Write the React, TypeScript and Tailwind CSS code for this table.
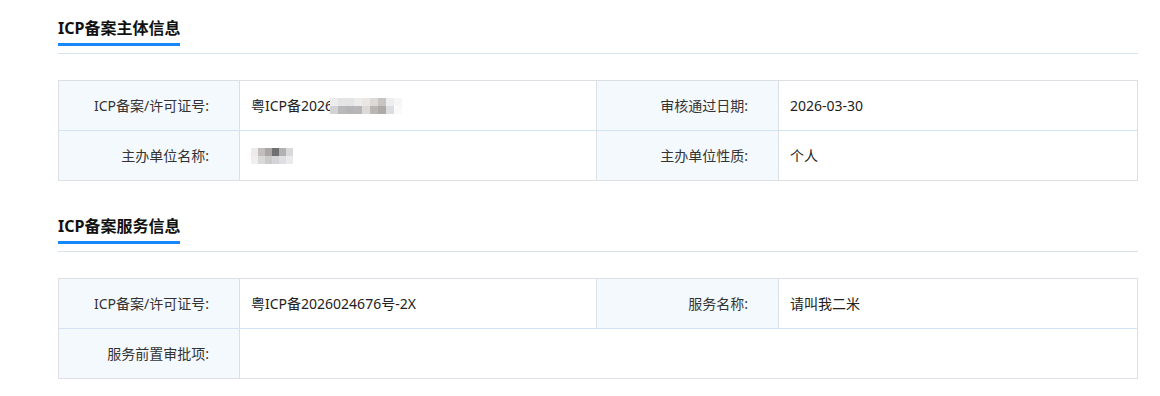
import type { ReactNode } from "react";

const font = {
  fontFamily: '"Noto Sans", "Noto Sans CJK SC", sans-serif',
};

// mosaic cells used for redacted values
const maskNumber = [
  ["#ededed", "#e5e5e5", "#e4e4e4", "#ececec", "#e9e6e3", "#ddd9d6", "#c9c4c2", "#eeeeee", "#f6f6f6"],
  ["#d2d2d4", "#b9b9bb", "#b5b5b7", "#b7b7b9", "#dcdad7", "#b9b6b4", "#aeaaa8", "#dcdde1", "#fafafa"],
];
const maskName = [
  ["#eeeaea", "#c3bebe", "#aaa6a6", "#707071", "#b1b1b3", "#d9d9db"],
  ["#f1eeee", "#dbd8d8", "#cbcacb", "#d4d4d6", "#dedfe1", "#eaeaec"],
];

function Mosaic({ cells, w }: { cells: string[][]; w: number }) {
  return (
    <span className="inline-flex flex-col">
      {cells.map((row, i) => (
        <span key={i} className="flex">
          {row.map((c, j) => (
            <span key={j} className="h-[8px]" style={{ width: w, background: c }} />
          ))}
        </span>
      ))}
    </span>
  );
}

function SectionTitle({ children }: { children: ReactNode }) {
  return (
    <div className="pb-[7px] border-b border-[#d5e3ef]">
      <span className="inline-block text-[16px] leading-[24px] font-bold text-[#111] pb-[3px] border-b-[3px] border-[#1787fb]">
        {children}
      </span>
    </div>
  );
}

function Label({ children, last }: { children: ReactNode; last?: boolean }) {
  return (
    <td
      className={`h-[50px] bg-[#f4f9fe] text-right pr-[30px] text-[14px] text-[#333] border-x border-x-[#dcdfe4] ${
        last ? "border-b border-b-[#dcdfe4]" : "border-b border-b-[#d3e3f3]"
      }`}
    >
      {children}
    </td>
  );
}

function Value({
  children,
  last,
  span,
}: {
  children?: ReactNode;
  last?: boolean;
  span?: number;
}) {
  return (
    <td
      colSpan={span}
      className={`h-[50px] pl-[11px] text-[14px] text-[#222] border-x border-x-[#dcdfe4] ${
        last ? "border-b border-b-[#dcdfe4]" : "border-b border-b-[#d3e3f3]"
      }`}
    >
      {children}
    </td>
  );
}

function InfoTable({ children }: { children: ReactNode }) {
  return (
    <table className="mt-[26px] w-full table-fixed border-collapse border-t border-[#dcdfe4]">
      <colgroup>
        <col className="w-[181px]" />
        <col className="w-[357px]" />
        <col className="w-[182px]" />
        <col />
      </colgroup>
      <tbody>{children}</tbody>
    </table>
  );
}

export default function App() {
  return (
    <div className="bg-white w-[1160px] h-[396px] pl-[58px] pr-[22px]" style={font}>
      <section className="pt-[16px] mb-[17px]">
        <SectionTitle>ICP备案主体信息</SectionTitle>
        <InfoTable>
          <tr>
            <Label>ICP备案/许可证号:</Label>
            <Value>
              <div className="flex items-center">
                <span>粤ICP备2026</span>
                <span className="-ml-[3px] flex">
                  <Mosaic cells={maskNumber} w={8} />
                </span>
              </div>
            </Value>
            <Label>审核通过日期:</Label>
            <Value>2026-03-30</Value>
          </tr>
          <tr>
            <Label last>主办单位名称:</Label>
            <Value last>
              <div className="flex items-center">
                <Mosaic cells={maskName} w={7} />
              </div>
            </Value>
            <Label last>主办单位性质:</Label>
            <Value last>个人</Value>
          </tr>
        </InfoTable>
      </section>

      <section className="pt-[16px]">
        <SectionTitle>ICP备案服务信息</SectionTitle>
        <InfoTable>
          <tr>
            <Label>ICP备案/许可证号:</Label>
            <Value>粤ICP备2026024676号-2X</Value>
            <Label>服务名称:</Label>
            <Value>请叫我二米</Value>
          </tr>
          <tr>
            <Label last>服务前置审批项:</Label>
            <Value last span={3} />
          </tr>
        </InfoTable>
      </section>
    </div>
  );
}
